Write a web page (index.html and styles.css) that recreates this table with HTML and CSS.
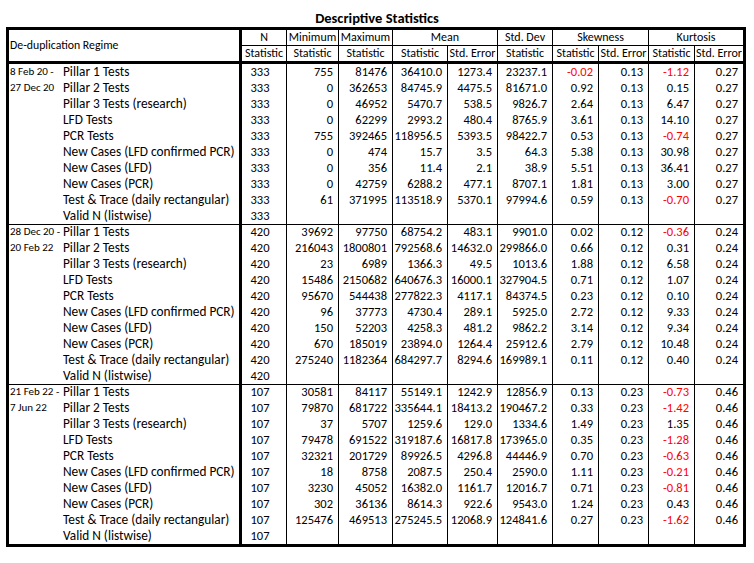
FILE: index.html
```html
<!DOCTYPE html>
<html>
<head>
<meta charset="utf-8">
<link rel="stylesheet" href="styles.css">
</head>
<body>
<div class="title">Descriptive Statistics</div>
<table class="stats">
<colgroup>
<col class="w-date"><col class="w-label"><col class="w-n"><col class="w-min"><col class="w-max"><col class="w-mean"><col class="w-mse"><col class="w-sd"><col class="w-sk"><col class="w-skse"><col class="w-ku"><col class="w-kuse">
</colgroup>
<thead>
<tr class="h1"><th class="regime" colspan="2" rowspan="2">De-duplication Regime</th><th>N</th><th>Minimum</th><th>Maximum</th><th colspan="2">Mean</th><th>Std. Dev</th><th colspan="2">Skewness</th><th colspan="2">Kurtosis</th></tr>
<tr class="h2"><th>Statistic</th><th>Statistic</th><th>Statistic</th><th>Statistic</th><th>Std. Error</th><th>Statistic</th><th>Statistic</th><th>Std. Error</th><th>Statistic</th><th>Std. Error</th></tr>
</thead>
<tbody>
<tr><td class="date" rowspan="10">8 Feb 20 -<br>27 Dec 20</td><td class="label">Pillar 1 Tests</td><td class="n">333</td><td>755</td><td>81476</td><td>36410.0</td><td>1273.4</td><td>23237.1</td><td class="neg">-0.02</td><td>0.13</td><td class="neg">-1.12</td><td>0.27</td></tr>
<tr><td class="label">Pillar 2 Tests</td><td class="n">333</td><td>0</td><td>362653</td><td>84745.9</td><td>4475.5</td><td>81671.0</td><td>0.92</td><td>0.13</td><td>0.15</td><td>0.27</td></tr>
<tr><td class="label">Pillar 3 Tests (research)</td><td class="n">333</td><td>0</td><td>46952</td><td>5470.7</td><td>538.5</td><td>9826.7</td><td>2.64</td><td>0.13</td><td>6.47</td><td>0.27</td></tr>
<tr><td class="label">LFD Tests</td><td class="n">333</td><td>0</td><td>62299</td><td>2993.2</td><td>480.4</td><td>8765.9</td><td>3.61</td><td>0.13</td><td>14.10</td><td>0.27</td></tr>
<tr><td class="label">PCR Tests</td><td class="n">333</td><td>755</td><td>392465</td><td>118956.5</td><td>5393.5</td><td>98422.7</td><td>0.53</td><td>0.13</td><td class="neg">-0.74</td><td>0.27</td></tr>
<tr><td class="label">New Cases (LFD confirmed PCR)</td><td class="n">333</td><td>0</td><td>474</td><td>15.7</td><td>3.5</td><td>64.3</td><td>5.38</td><td>0.13</td><td>30.98</td><td>0.27</td></tr>
<tr><td class="label">New Cases (LFD)</td><td class="n">333</td><td>0</td><td>356</td><td>11.4</td><td>2.1</td><td>38.9</td><td>5.51</td><td>0.13</td><td>36.41</td><td>0.27</td></tr>
<tr><td class="label">New Cases (PCR)</td><td class="n">333</td><td>0</td><td>42759</td><td>6288.2</td><td>477.1</td><td>8707.1</td><td>1.81</td><td>0.13</td><td>3.00</td><td>0.27</td></tr>
<tr><td class="label">Test &amp; Trace (daily rectangular)</td><td class="n">333</td><td>61</td><td>371995</td><td>113518.9</td><td>5370.1</td><td>97994.6</td><td>0.59</td><td>0.13</td><td class="neg">-0.70</td><td>0.27</td></tr>
<tr><td class="label">Valid N (listwise)</td><td class="n">333</td><td></td><td></td><td></td><td></td><td></td><td></td><td></td><td></td><td></td></tr>
</tbody>
<tbody>
<tr><td class="date" rowspan="10">28 Dec 20 -<br>20 Feb 22</td><td class="label">Pillar 1 Tests</td><td class="n">420</td><td>39692</td><td>97750</td><td>68754.2</td><td>483.1</td><td>9901.0</td><td>0.02</td><td>0.12</td><td class="neg">-0.36</td><td>0.24</td></tr>
<tr><td class="label">Pillar 2 Tests</td><td class="n">420</td><td>216043</td><td>1800801</td><td>792568.6</td><td>14632.0</td><td>299866.0</td><td>0.66</td><td>0.12</td><td>0.31</td><td>0.24</td></tr>
<tr><td class="label">Pillar 3 Tests (research)</td><td class="n">420</td><td>23</td><td>6989</td><td>1366.3</td><td>49.5</td><td>1013.6</td><td>1.88</td><td>0.12</td><td>6.58</td><td>0.24</td></tr>
<tr><td class="label">LFD Tests</td><td class="n">420</td><td>15486</td><td>2150682</td><td>640676.3</td><td>16000.1</td><td>327904.5</td><td>0.71</td><td>0.12</td><td>1.07</td><td>0.24</td></tr>
<tr><td class="label">PCR Tests</td><td class="n">420</td><td>95670</td><td>544438</td><td>277822.3</td><td>4117.1</td><td>84374.5</td><td>0.23</td><td>0.12</td><td>0.10</td><td>0.24</td></tr>
<tr><td class="label">New Cases (LFD confirmed PCR)</td><td class="n">420</td><td>96</td><td>37773</td><td>4730.4</td><td>289.1</td><td>5925.0</td><td>2.72</td><td>0.12</td><td>9.33</td><td>0.24</td></tr>
<tr><td class="label">New Cases (LFD)</td><td class="n">420</td><td>150</td><td>52203</td><td>4258.3</td><td>481.2</td><td>9862.2</td><td>3.14</td><td>0.12</td><td>9.34</td><td>0.24</td></tr>
<tr><td class="label">New Cases (PCR)</td><td class="n">420</td><td>670</td><td>185019</td><td>23894.0</td><td>1264.4</td><td>25912.6</td><td>2.79</td><td>0.12</td><td>10.48</td><td>0.24</td></tr>
<tr><td class="label">Test &amp; Trace (daily rectangular)</td><td class="n">420</td><td>275240</td><td>1182364</td><td>684297.7</td><td>8294.6</td><td>169989.1</td><td>0.11</td><td>0.12</td><td>0.40</td><td>0.24</td></tr>
<tr><td class="label">Valid N (listwise)</td><td class="n">420</td><td></td><td></td><td></td><td></td><td></td><td></td><td></td><td></td><td></td></tr>
</tbody>
<tbody>
<tr><td class="date" rowspan="10">21 Feb 22 -<br>7 Jun 22</td><td class="label">Pillar 1 Tests</td><td class="n">107</td><td>30581</td><td>84117</td><td>55149.1</td><td>1242.9</td><td>12856.9</td><td>0.13</td><td>0.23</td><td class="neg">-0.73</td><td>0.46</td></tr>
<tr><td class="label">Pillar 2 Tests</td><td class="n">107</td><td>79870</td><td>681722</td><td>335644.1</td><td>18413.2</td><td>190467.2</td><td>0.33</td><td>0.23</td><td class="neg">-1.42</td><td>0.46</td></tr>
<tr><td class="label">Pillar 3 Tests (research)</td><td class="n">107</td><td>37</td><td>5707</td><td>1259.6</td><td>129.0</td><td>1334.6</td><td>1.49</td><td>0.23</td><td>1.35</td><td>0.46</td></tr>
<tr><td class="label">LFD Tests</td><td class="n">107</td><td>79478</td><td>691522</td><td>319187.6</td><td>16817.8</td><td>173965.0</td><td>0.35</td><td>0.23</td><td class="neg">-1.28</td><td>0.46</td></tr>
<tr><td class="label">PCR Tests</td><td class="n">107</td><td>32321</td><td>201729</td><td>89926.5</td><td>4296.8</td><td>44446.9</td><td>0.70</td><td>0.23</td><td class="neg">-0.63</td><td>0.46</td></tr>
<tr><td class="label">New Cases (LFD confirmed PCR)</td><td class="n">107</td><td>18</td><td>8758</td><td>2087.5</td><td>250.4</td><td>2590.0</td><td>1.11</td><td>0.23</td><td class="neg">-0.21</td><td>0.46</td></tr>
<tr><td class="label">New Cases (LFD)</td><td class="n">107</td><td>3230</td><td>45052</td><td>16382.0</td><td>1161.7</td><td>12016.7</td><td>0.71</td><td>0.23</td><td class="neg">-0.81</td><td>0.46</td></tr>
<tr><td class="label">New Cases (PCR)</td><td class="n">107</td><td>302</td><td>36136</td><td>8614.3</td><td>922.6</td><td>9543.0</td><td>1.24</td><td>0.23</td><td>0.43</td><td>0.46</td></tr>
<tr><td class="label">Test &amp; Trace (daily rectangular)</td><td class="n">107</td><td>125476</td><td>469513</td><td>275245.5</td><td>12068.9</td><td>124841.6</td><td>0.27</td><td>0.23</td><td class="neg">-1.62</td><td>0.46</td></tr>
<tr><td class="label">Valid N (listwise)</td><td class="n">107</td><td></td><td></td><td></td><td></td><td></td><td></td><td></td><td></td><td></td></tr>
</tbody>
</table>
</body>
</html>
```
FILE: styles.css
```css
html, body {
  margin: 0;
  padding: 0;
  background: #fff;
}
body {
  font-family: Carlito, Calibri, "Liberation Sans", sans-serif;
  color: #000;
}
.title {
  box-sizing: border-box;
  height: 27px;
  padding-top: 10px;
  line-height: 16px;
  text-align: center;
  font-weight: bold;
  font-size: 14.5px;
}
.stats {
  margin-left: 6px;
  width: 740px;
  table-layout: fixed;
  border-collapse: separate;
  border-spacing: 0;
  border: 3px solid #000;
  font-size: 12.5px;
}
.w-date { width: 53px; }
.w-label { width: 180px; }
.w-n { width: 45px; }
.w-min { width: 52px; }
.w-max { width: 54px; }
.w-mean { width: 55px; }
.w-mse { width: 50px; }
.w-sd { width: 55px; }
.w-sk { width: 46px; }
.w-skse { width: 50px; }
.w-ku { width: 46px; }
.w-kuse { width: 48px; }

.stats th, .stats td {
  padding: 0 5px 0 0;
  border-right: 1px solid #000;
  white-space: nowrap;
  overflow: visible;
  line-height: 16px;
  vertical-align: middle;
}
.stats th:last-child, .stats td:last-child {
  border-right: 0;
}
.stats th {
  font-weight: normal;
  font-size: 12px;
  text-align: center;
  padding: 0;
  line-height: 15px;
}
.h1 th {
  border-bottom: 1px solid #000;
}
.h2 th {
  border-bottom: 3px solid #000;
}
.stats th.regime {
  text-align: left;
  padding-left: 1px;
  border-right: 3px solid #000;
  border-bottom: 3px solid #000;
  font-size: 11.8px;
}
.stats td {
  text-align: right;
}
.stats td.date {
  vertical-align: top;
  text-align: left;
  border-right: 0;
  padding: 0 0 0 1px;
  font-size: 11px;
}
.stats td.label {
  text-align: left;
  padding: 0 0 0 1px;
  border-right: 3px solid #000;
  font-size: 13.3px;
}
.stats td.n {
  text-align: center;
  padding: 0 8px 0 0;
}
.stats td.neg {
  color: #f00;
}
tbody + tbody tr:first-child td {
  box-shadow: inset 0 1px 0 #000;
}
```
